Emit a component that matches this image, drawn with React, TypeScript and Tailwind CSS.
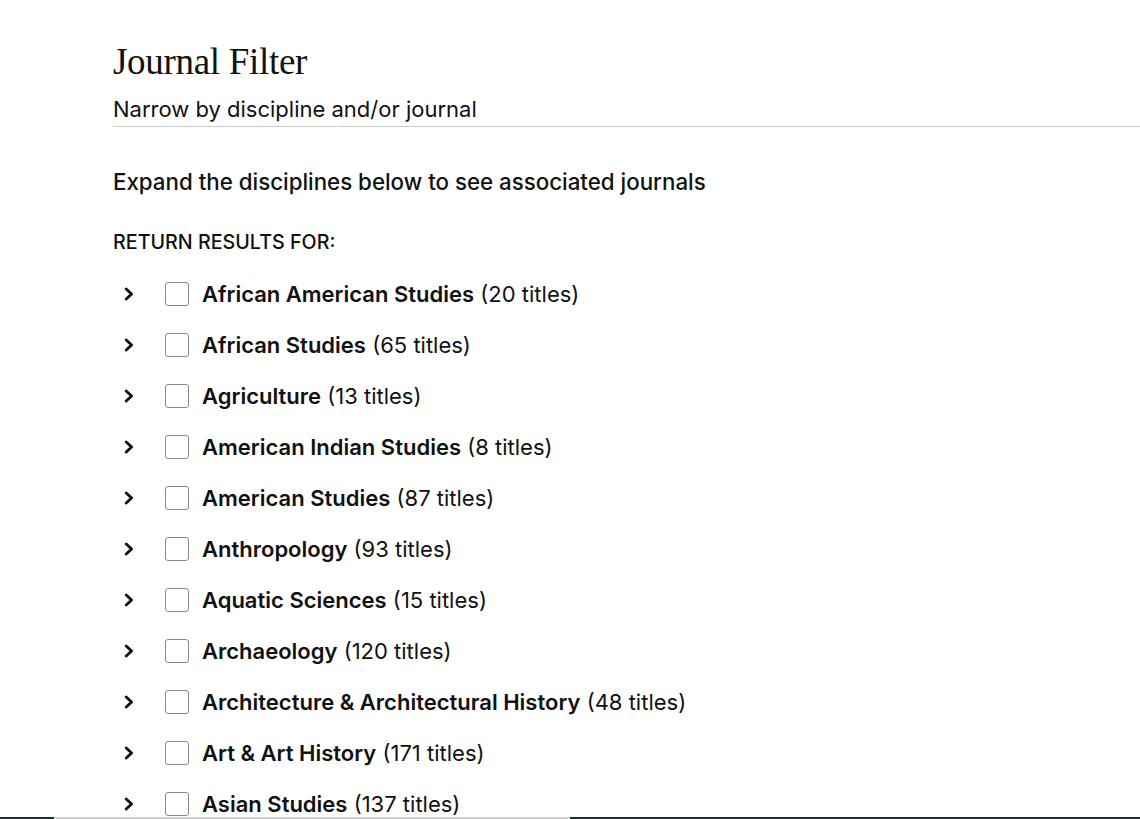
import React from "react";

const items: [string, number][] = [
  ["African American Studies", 20],
  ["African Studies", 65],
  ["Agriculture", 13],
  ["American Indian Studies", 8],
  ["American Studies", 87],
  ["Anthropology", 93],
  ["Aquatic Sciences", 15],
  ["Archaeology", 120],
  ["Architecture & Architectural History", 48],
  ["Art & Art History", 171],
  ["Asian Studies", 137],
];

function Chevron() {
  return (
    <svg width="14" height="16" viewBox="0 0 14 16" className="shrink-0">
      <path d="M4.2 3 L9.6 8 L4.2 13" fill="none" stroke="#111" strokeWidth="2.9" strokeLinecap="round" strokeLinejoin="round" />
    </svg>
  );
}

export default function App() {
  return (
    <div className="relative h-[819px] w-[1140px] overflow-hidden bg-white text-[#111]" style={{ fontFamily: "Inter, 'Noto Sans', sans-serif" }}>
      <div className="pl-[113px] pt-[42px]">
        <h1 className="text-[37px] leading-[40px] tracking-[-0.3px]" style={{ fontFamily: "'Liberation Serif', 'DejaVu Serif', serif" }}>
          Journal Filter
        </h1>
        <p className="mt-[12px] text-[22px] leading-[30px] text-[#111]">Narrow by discipline and/or journal</p>
        <div className="mt-[2px] h-px bg-[#cccccc]" />
        <p className="mt-[41px] text-[22.3px] font-medium leading-[28px]">Expand the disciplines below to see associated journals</p>
        <p className="mt-[34px] text-[19.7px] font-medium leading-[24px]">RETURN RESULTS FOR:</p>
        <ul className="mt-[28px] flex flex-col gap-[27px]">
          {items.map(([name, n]) => (
            <li key={name} className="flex h-[24px] items-center">
              <span className="ml-[9px] flex w-[14px] justify-center"><Chevron /></span>
              <span className="ml-[29px] h-[24px] w-[24px] shrink-0 rounded-[3px] border border-[#8a8a8a] bg-white" />
              <span className="ml-[13px] whitespace-nowrap text-[22px] leading-[26px]">
                <span className="font-semibold">{name}</span> ({n} titles)
              </span>
            </li>
          ))}
        </ul>
      </div>
      <div className="absolute bottom-0 left-0 flex h-[2px] w-full">
        <div className="w-[54px] bg-[#1f2d2d]" />
        <div className="w-[516px] bg-[#cfcfcf]" />
        <div className="flex-1 bg-[#1f2d2d]" />
      </div>
    </div>
  );
}
